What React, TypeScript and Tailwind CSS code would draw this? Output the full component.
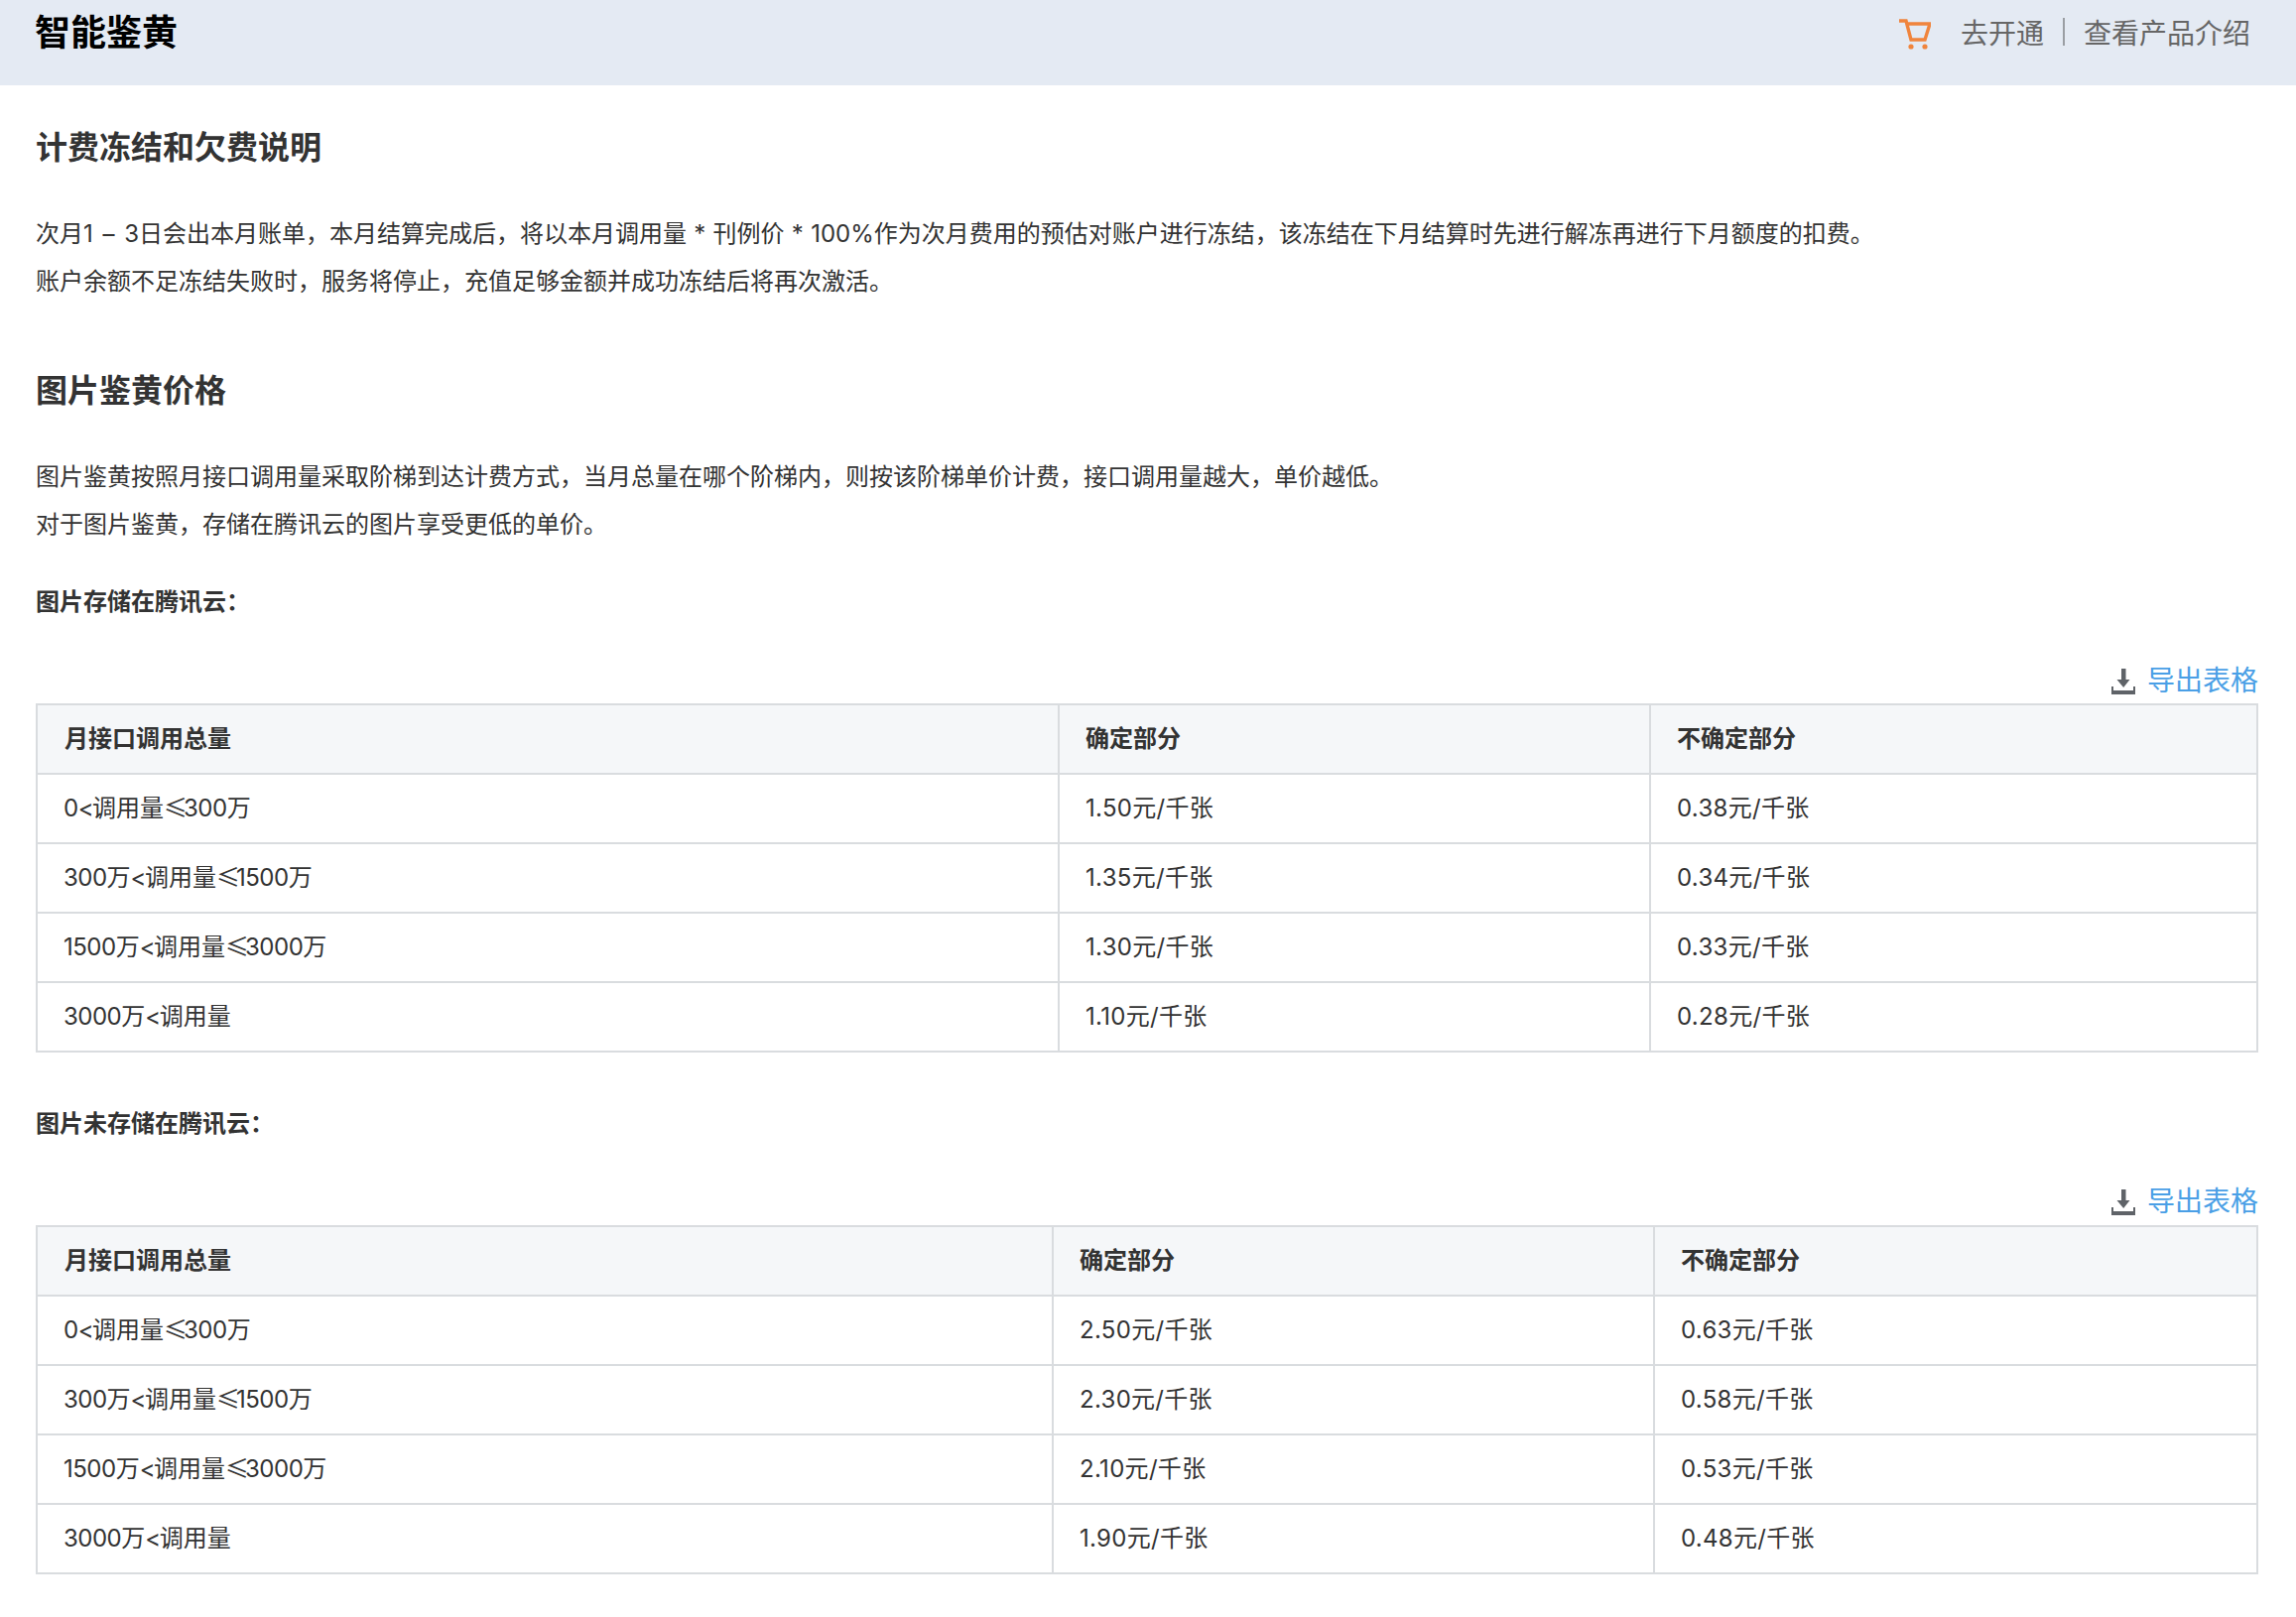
const font = 'font-["Inter","Noto_Sans_CJK_SC",sans-serif]'

const table1 = [
  ['0<调用量≤300万', '1.50元/千张', '0.38元/千张'],
  ['300万<调用量≤1500万', '1.35元/千张', '0.34元/千张'],
  ['1500万<调用量≤3000万', '1.30元/千张', '0.33元/千张'],
  ['3000万<调用量', '1.10元/千张', '0.28元/千张'],
]

const table2 = [
  ['0<调用量≤300万', '2.50元/千张', '0.63元/千张'],
  ['300万<调用量≤1500万', '2.30元/千张', '0.58元/千张'],
  ['1500万<调用量≤3000万', '2.10元/千张', '0.53元/千张'],
  ['3000万<调用量', '1.90元/千张', '0.48元/千张'],
]

function CartIcon() {
  return (
    <svg width="32" height="32" viewBox="0 0 32 32" fill="none">
      <path d="M0 3H7L12 22H26L31 6H9" stroke="#f0843c" strokeWidth="3.4" />
      <circle cx="12" cy="29" r="2.6" fill="#f0843c" />
      <circle cx="26" cy="29" r="2.6" fill="#f0843c" />
    </svg>
  )
}

function DownloadIcon() {
  return (
    <svg width="24" height="26" viewBox="0 0 24 26" fill="#5f6368">
      <path d="M10 0H14.500V11H18.500L12.200 19L5.500 11H10Z" />
      <path d="M0 18H2V22H22V18H24V26H0Z" />
    </svg>
  )
}

function ExportRow() {
  return (
    <div className="flex justify-end items-center gap-[12px] h-[40px]">
      <DownloadIcon />
      <span className="text-[28px] leading-[38px] mb-[2px] text-[#4a9fe6]">导出表格</span>
    </div>
  )
}

// 数字和两个符号在原图里比 Inter 窄一点，这里单独收一下
function Cell({ text }: { text: string }) {
  if (!text.includes('<')) return <span className="tracking-[0.3px]">{text}</span>
  return (
    <>
      {text.split(/(\d+|<|≤)/).map((part, i) => {
        if (part === '<') return <span key={i} className="tracking-[-1.5px]">&lt;</span>
        if (part === '≤') return <span key={i} className='font-["Noto_Sans_CJK_SC"] leading-[0] tracking-[-4px]'>≤</span>
        if (/\d/.test(part)) return <span key={i} className="tracking-[-0.5px]">{part}</span>
        return part
      })}
    </>
  )
}

function PriceTable({ rows, col1, col2 }: { rows: string[][]; col1: string; col2: string }) {
  return (
    <table className="w-full table-fixed border-collapse border-2 border-[#d9dcdf] text-[24px] text-[#333]">
      <colgroup>
        <col className={col1} />
        <col className={col2} />
        <col />
      </colgroup>
      <thead>
        <tr className="h-[70px] bg-[#f5f7f9] font-bold">
          <th className="border-2 border-[#d9dcdf] pl-[27px] text-left">月接口调用总量</th>
          <th className="border-2 border-[#d9dcdf] pl-[26px] text-left">确定部分</th>
          <th className="border-2 border-[#d9dcdf] pl-[26px] text-left">不确定部分</th>
        </tr>
      </thead>
      <tbody>
        {rows.map((row) => (
          <tr key={row[0]} className="h-[70px]">
            {row.map((cell) => (
              <td key={cell} className="border-2 border-[#d9dcdf] pl-[26px]"><Cell text={cell} /></td>
            ))}
          </tr>
        ))}
      </tbody>
    </table>
  )
}

export default function App() {
  return (
    <div className={`w-[2314px] h-[1630px] overflow-hidden bg-white ${font}`}>
      <header className="h-[86px] bg-[#e4eaf3] pl-[35px] pr-[46px] flex justify-between items-start">
        <h1 className="text-[36px] leading-[66px] font-bold text-black">智能鉴黄</h1>
        <div className="flex items-center h-[68px] text-[28px] text-[#666]">
          <CartIcon />
          <span className="ml-[30px]">去开通</span>
          <span className="mx-[19px] h-[28px] w-[2px] bg-[#9a9ea3] mb-[4px]" />
          <span>查看产品介绍</span>
        </div>
      </header>

      <main className="pl-[36px] pr-[38px]">
        <h2 className="mt-[41px] text-[32px] leading-[44px] font-bold text-[#333]">计费冻结和欠费说明</h2>
        <div className="mt-[41px] text-[24px] leading-[48px] text-[#333]">
          <p className="[word-spacing:0.5px]">次月1 <span className="px-[2.5px]">–</span> 3日会出本月账单，本月结算完成后，将以本月调用量 * 刊例价 * 100%作为次月费用的预估对账户进行冻结，该冻结在下月结算时先进行解冻再进行下月额度的扣费。</p>
          <p>账户余额不足冻结失败时，服务将停止，充值足够金额并成功冻结后将再次激活。</p>
        </div>

        <h2 className="mt-[64px] text-[32px] leading-[44px] font-bold text-[#333]">图片鉴黄价格</h2>
        <div className="mt-[41px] text-[24px] leading-[48px] text-[#333]">
          <p>图片鉴黄按照月接口调用量采取阶梯到达计费方式，当月总量在哪个阶梯内，则按该阶梯单价计费，接口调用量越大，单价越低。</p>
          <p>对于图片鉴黄，存储在腾讯云的图片享受更低的单价。</p>
        </div>

        <p className="mt-[30px] text-[24px] leading-[48px] font-bold text-[#333]">图片存储在腾讯云：</p>
        <div className="mt-[36px] mb-[2px]"><ExportRow /></div>
        <PriceTable rows={table1} col1="w-[1030px]" col2="w-[596px]" />

        <p className="mt-[48px] text-[24px] leading-[48px] font-bold text-[#333]">图片未存储在腾讯云：</p>
        <div className="mt-[35px] mb-[3px]"><ExportRow /></div>
        <PriceTable rows={table2} col1="w-[1024px]" col2="w-[606px]" />
      </main>
    </div>
  )
}
